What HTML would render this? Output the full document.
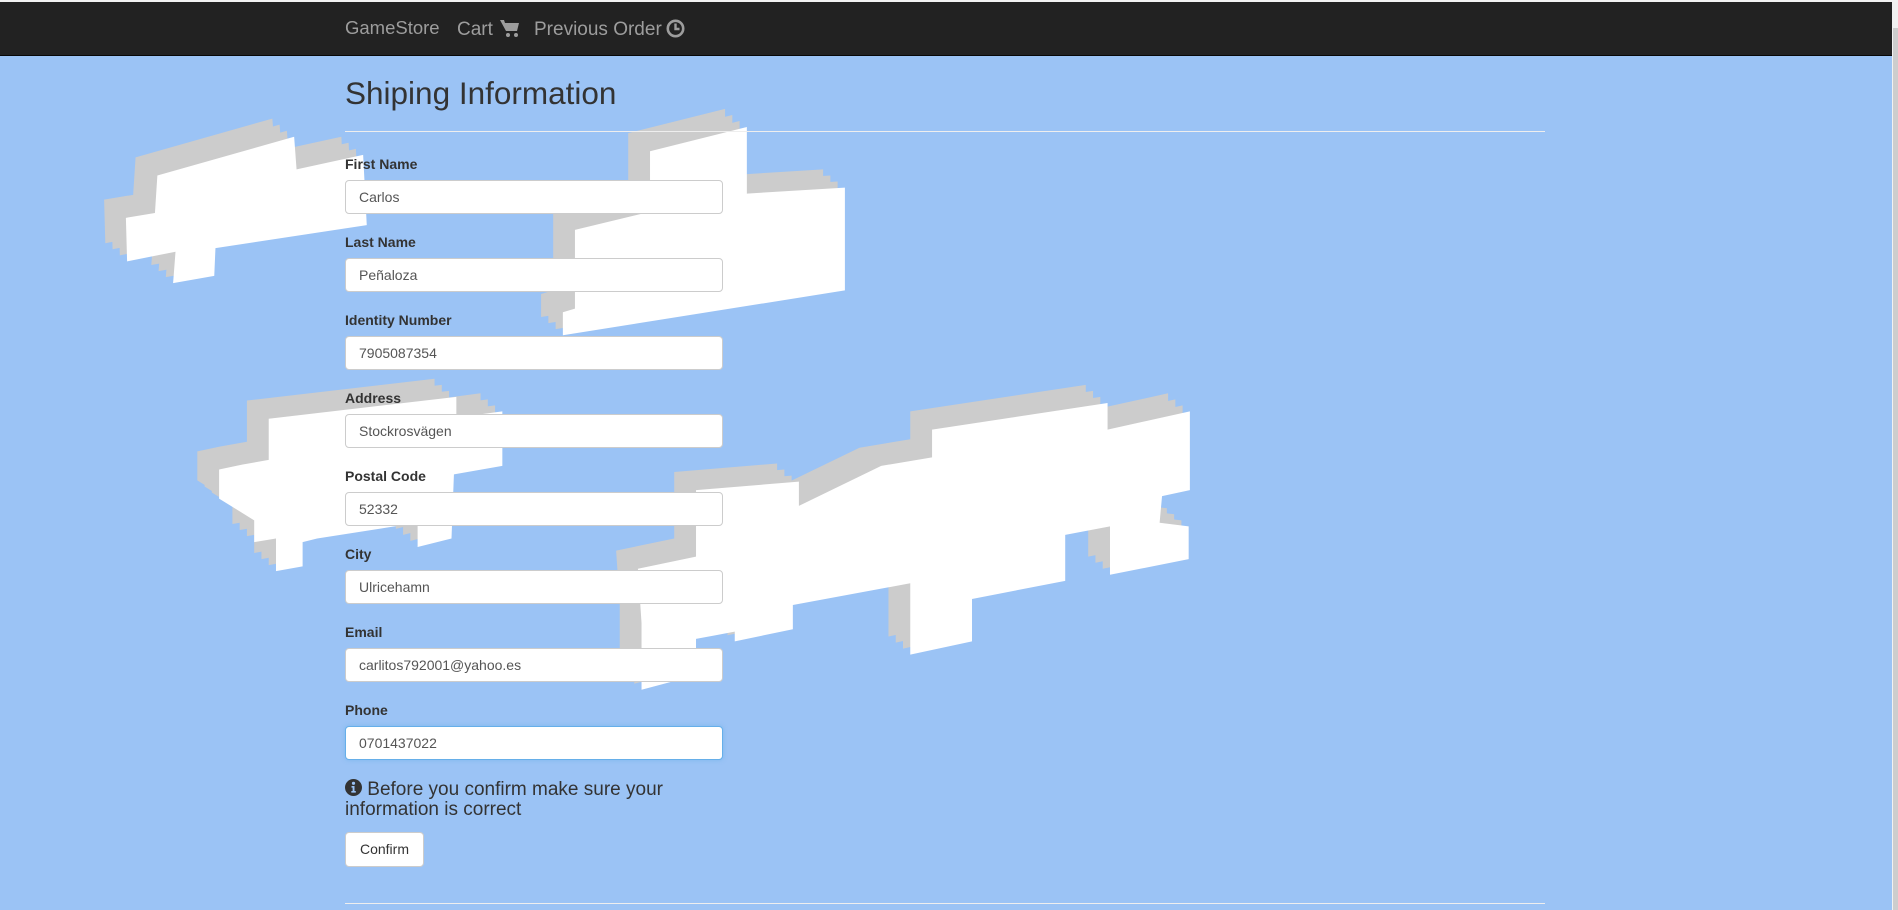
<!DOCTYPE html>
<html><head><meta charset="utf-8">
<style>
html,body{margin:0;padding:0;width:1898px;height:910px;overflow:hidden;background:#9bc3f5;font-family:"Liberation Sans",Arial,sans-serif;position:relative}
.top{position:absolute;left:0;top:0;width:1898px;height:2px;background:#f2f2f2}
.nav{position:absolute;left:0;top:2px;width:1892px;height:53px;background:#222;border-bottom:1px solid #080808}
.nav span{position:absolute;color:#9d9d9d;white-space:nowrap}
.scroll{position:absolute;left:1892px;top:2px;width:6px;height:908px;background:#f1f1f1}
.thumb{position:absolute;left:1893px;top:28px;width:5px;height:882px;background:#cdcdcd}
svg.bg{position:absolute;left:0;top:0}
h2{position:absolute;left:345px;top:73px;margin:0;font-size:31.5px;font-weight:400;color:#333;line-height:40px}
.hr{position:absolute;left:345px;width:1200px;height:1px;background:#eee}
label{position:absolute;left:345px;font-size:14px;font-weight:bold;color:#333}
.in{position:absolute;left:345px;width:376px;height:32px;background:#fff;border:1px solid #ccc;border-radius:4px;box-sizing:content-box;font-size:14px;color:#555;line-height:32px;text-indent:13px}
.info{position:absolute;left:345px;top:779px;width:340px;font-size:19px;line-height:20px;color:#333}
.btn{position:absolute;left:345px;top:832px;width:77px;height:33px;background:#fff;border:1px solid #ccc;border-radius:4px;font-size:14px;color:#333;line-height:33px;text-align:center}
</style></head><body>
<div class="top"></div>
<div class="nav">
<span style="left:345px;top:15px;font-size:18.5px">GameStore</span>
<span style="left:457px;top:17px;font-size:19px">Cart</span>
<svg style="position:absolute;left:500px;top:17px" width="20" height="19" viewBox="0 0 20 19"><path d="M0 1h4l1 3h14l-2 8H6z" fill="#9d9d9d"/><circle cx="8" cy="16" r="2" fill="#9d9d9d"/><circle cx="16" cy="16" r="2" fill="#9d9d9d"/></svg>
<span style="left:534px;top:17px;font-size:19px">Previous Order</span>
<svg style="position:absolute;left:666px;top:17px" width="19" height="19" viewBox="0 0 19 19"><circle cx="9.5" cy="9.5" r="7.7" fill="none" stroke="#9d9d9d" stroke-width="2.6"/><path d="M9.5 4.5v5.5h4" fill="none" stroke="#9d9d9d" stroke-width="2.4"/></svg>
</div>
<div class="scroll"></div><div class="thumb"></div>
<svg class="bg" width="1898" height="910" viewBox="0 0 1568 752" preserveAspectRatio="none">
<defs>
<polygon id="c1" points="130,145 243,113 245,140 300,128 303,186 178,205 177,228 143,234 145,208 105,216 104,180 128,176"/>
<polygon id="c2" points="537,125 617,105 617,160 698,155 698,240 465,277 465,258 475,255 475,190 537,175"/>
<polygon id="c3" points="222,346 377,328 377,345 415,340 415,385 375,392 373,445 345,452 345,432 262,445 250,448 250,468 228,472 228,445 210,448 210,430 181,412 181,388 200,384 222,380"/>
<polygon id="c4" points="575,405 660,398 660,418 728,385 770,378 770,355 915,333 915,355 983,340 983,405 960,410 958,432 982,435 982,462 917,475 917,435 880,442 880,480 803,495 803,530 752,541 752,482 655,500 655,520 607,530 607,522 575,528 575,558 530,570 530,515 527,470 575,460"/>
</defs>
<g fill="#cccccc">
<use href="#c1" x="-6" y="-5"/><use href="#c1" x="-12" y="-10"/><use href="#c1" x="-18" y="-15"/>
<use href="#c2" x="-6" y="-5"/><use href="#c2" x="-12" y="-10"/><use href="#c2" x="-18" y="-15"/>
<use href="#c3" x="-6" y="-5"/><use href="#c3" x="-12" y="-10"/><use href="#c3" x="-18" y="-15"/>
<use href="#c4" x="-6" y="-5"/><use href="#c4" x="-12" y="-10"/><use href="#c4" x="-18" y="-15"/>
</g>
<g fill="#fff"><use href="#c1"/><use href="#c2"/><use href="#c3"/><use href="#c4"/></g>
</svg>
<h2>Shiping Information</h2>
<div class="hr" style="top:131px"></div>
<label style="top:156px">First Name</label><div class="in" style="top:180px">Carlos</div>
<label style="top:234px">Last Name</label><div class="in" style="top:258px">Peñaloza</div>
<label style="top:312px">Identity Number</label><div class="in" style="top:336px">7905087354</div>
<label style="top:390px">Address</label><div class="in" style="top:414px">Stockrosvägen</div>
<label style="top:468px">Postal Code</label><div class="in" style="top:492px">52332</div>
<label style="top:546px">City</label><div class="in" style="top:570px">Ulricehamn</div>
<label style="top:624px">Email</label><div class="in" style="top:648px">carlitos792001@yahoo.es</div>
<label style="top:702px">Phone</label><div class="in" style="top:726px;border-color:#66afe9;box-shadow:0 0 4px rgba(102,175,233,.6)">0701437022</div>
<div class="info"><svg width="17" height="17" viewBox="0 0 17 17" style="vertical-align:-1px"><circle cx="8.5" cy="8.5" r="8.5" fill="#333"/><circle cx="8.5" cy="4.3" r="1.6" fill="#9bc3f5"/><path d="M6.5 7h3v5h1.3v1.6H6.3V12h1.3V8.6H6.5z" fill="#9bc3f5"/></svg> Before you confirm make sure your information is correct</div>
<div class="btn">Confirm</div>
<div class="hr" style="top:903px"></div>
</body></html>
